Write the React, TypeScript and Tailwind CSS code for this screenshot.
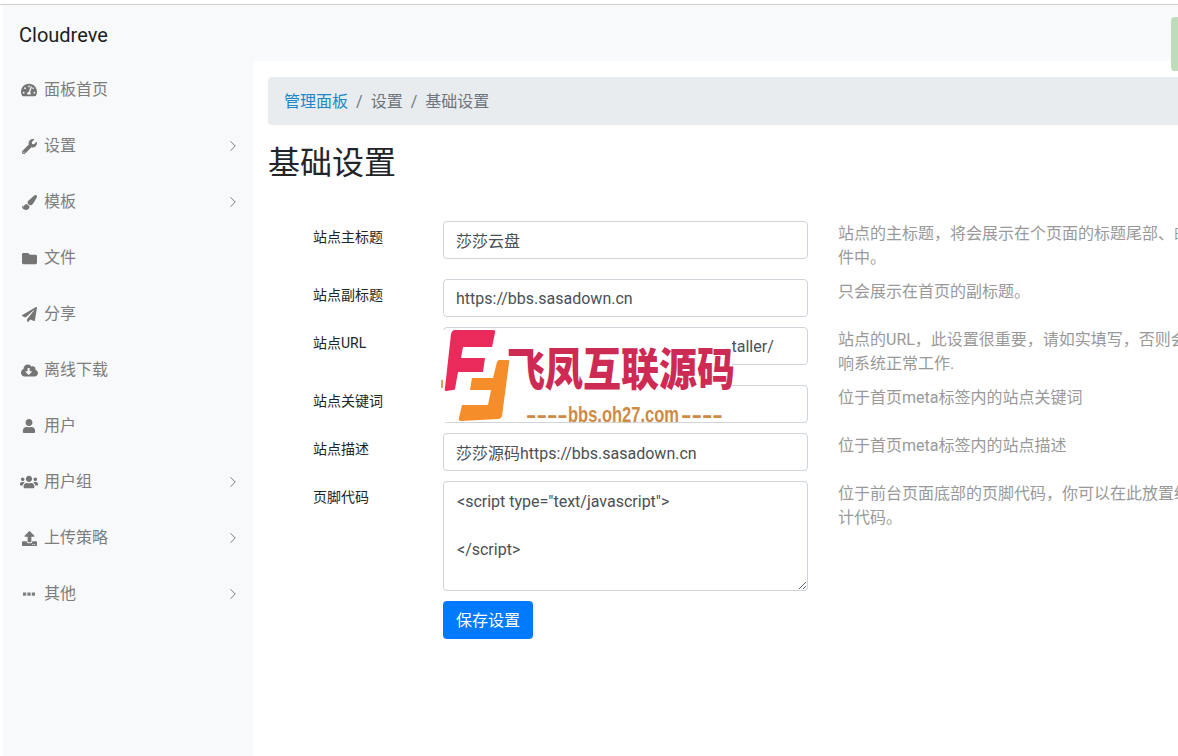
import { ChevronRight } from "lucide-react";
import type { IconType } from "react-icons";
import {
  FaTachometerAlt,
  FaWrench,
  FaPaintBrush,
  FaFolder,
  FaPaperPlane,
  FaCloudDownloadAlt,
  FaUser,
  FaUsers,
  FaUpload,
} from "react-icons/fa";

const FONT = "font-['Roboto','Noto_Sans_CJK_SC',sans-serif]";

// old font-awesome ellipsis has square dots, the package one is round
function SquareDots({ size }: { size?: number | string }) {
  return (
    <svg width={size} height={size} viewBox="0 0 14 14" fill="currentColor">
      <rect x="1" y="5.5" width="3.2" height="3.2" />
      <rect x="5.4" y="5.5" width="3.2" height="3.2" />
      <rect x="9.8" y="5.5" width="3.2" height="3.2" />
    </svg>
  );
}

const navItems: { label: string; icon: IconType; size: number; more?: boolean }[] = [
  { label: "面板首页", icon: FaTachometerAlt, size: 16 },
  { label: "设置", icon: FaWrench, size: 15, more: true },
  { label: "模板", icon: FaPaintBrush, size: 15, more: true },
  { label: "文件", icon: FaFolder, size: 15 },
  { label: "分享", icon: FaPaperPlane, size: 15 },
  { label: "离线下载", icon: FaCloudDownloadAlt, size: 17 },
  { label: "用户", icon: FaUser, size: 14 },
  { label: "用户组", icon: FaUsers, size: 18, more: true },
  { label: "上传策略", icon: FaUpload, size: 15, more: true },
  { label: "其他", icon: SquareDots as IconType, size: 14, more: true },
];

const inputClass =
  "h-[38px] w-[365px] rounded border border-[#ced4da] bg-white px-3 text-base text-[#495057] outline-none";

function Field({ label, value, help, tall }: { label: string; value: string; help: string; tall?: boolean }) {
  return (
    <div className={`flex items-start ${tall ? "h-[58px]" : "h-[48px]"}`}>
      <label className="w-[130px] pt-[7px] text-sm leading-[18px] text-[#212529]">{label}</label>
      <input className={inputClass} defaultValue={value} readOnly />
      <p className="ml-[30px] w-[365px] shrink-0 pt-px text-base leading-6 text-[#999999]">{help}</p>
    </div>
  );
}

function Dashes() {
  return (
    <span className="inline-block w-[42px] origin-left scale-x-[1.9] tracking-normal">----</span>
  );
}

function Watermark() {
  return (
    <div className="absolute left-[443px] top-[330px] h-[92px] w-[289px] bg-white">
      <div className="absolute left-[-2px] top-[50px] h-[8px] w-[2px] bg-[#d9a05f]" />
      <svg className="absolute left-0 top-0" width="70" height="92" viewBox="0 0 70 92">
        <path
          d="M12 0H50Q53 0 52 3L49 17H20L18 28H42L40 42H15L12 59Q12 60 10 60L3 61Q1 61 2 58L8 4Q9 0 12 0Z"
          fill="#ea2a5b"
        />
        <path
          d="M56 30H65Q67 30 66 33L59 86Q58 89 55 89L18 91Q15 91 16 88L19 75H45L48 60H27L29 48H50L54 32Q55 30 56 30Z"
          fill="#f58d2a"
        />
      </svg>
      <div className="absolute left-[64px] top-[12px] origin-top scale-y-[1.2] whitespace-nowrap text-[38px] leading-[42px] font-black text-[#cd2a54] font-['Noto_Sans_CJK_SC',sans-serif]">
        飞凤互联源码
      </div>
      <div className="absolute left-[83px] top-[74px] flex h-[20px] origin-center scale-y-[1.3] items-center whitespace-nowrap text-[16.5px] font-bold text-[#cf8a45] font-['Liberation_Sans',sans-serif]">
        <Dashes />
        <span>bbs.oh27.com</span>
        <span className="ml-[2px] flex">
          <Dashes />
        </span>
      </div>
    </div>
  );
}

export default function App() {
  return (
    <div className={`${FONT} relative h-[756px] w-[1178px] overflow-hidden bg-white`}>
      <div className="h-[5px] border-b border-[#cfcfcf] bg-white" />
      <div className="ml-[3px] flex h-[751px] flex-col">
        <header className="flex h-[56px] shrink-0 items-center bg-[#f8f9fa] pl-4 pt-1">
          <span className="text-xl text-[#1d1d1d]">Cloudreve</span>
        </header>
        <div className="flex min-h-0 flex-1">
          <aside className="w-[250px] shrink-0 bg-[#f8f9fa]">
            {navItems.map(({ label, icon: Icon, size, more }) => (
              <div key={label} className="flex h-[56px] items-center pl-[18px] pr-[11px] pt-[2px] text-base text-[#7d7d7d]">
                <span className="flex w-4 justify-center">
                  <Icon size={size} className="shrink-0 text-[#757575]" />
                </span>
                <span className="ml-[7px] flex-1">{label}</span>
                {more && <ChevronRight size={18} strokeWidth={1.2} className="text-[#6e6e6e]" />}
              </div>
            ))}
          </aside>
          <main className="min-w-0 flex-1 pl-[15px] pt-4">
            <nav className="flex h-[48px] w-[1000px] items-center rounded bg-[#e9ecef] px-4 pt-[2px] text-base text-[#6c757d]">
              <span className="text-[#1f86c7]">管理面板</span>
              <span className="px-2">/</span>
              <span>设置</span>
              <span className="px-2">/</span>
              <span>基础设置</span>
            </nav>
            <h1 className="mt-[14px] text-[32px] leading-[48px] font-normal text-[#212529]">基础设置</h1>
            <form className="ml-[45px] mt-[34px] w-[900px]">
              <Field
                tall
                label="站点主标题"
                value="莎莎云盘"
                help="站点的主标题，将会展示在个页面的标题尾部、邮件中。"
              />
              <Field label="站点副标题" value="https://bbs.sasadown.cn" help="只会展示在首页的副标题。" />
              <Field
                tall
                label="站点URL"
                value="https://bbs.sasadown.cn/cloudrive/installer/"
                help="站点的URL，此设置很重要，请如实填写，否则会影响系统正常工作."
              />
              <Field label="站点关键词" value="" help="位于首页meta标签内的站点关键词" />
              <Field label="站点描述" value="莎莎源码https://bbs.sasadown.cn" help="位于首页meta标签内的站点描述" />
              <div className="flex h-[120px] items-start">
                <label className="w-[130px] pt-[7px] text-sm leading-[18px] text-[#212529]">页脚代码</label>
                <textarea
                  className="h-[110px] w-[365px] rounded border border-[#ced4da] bg-white px-[13px] py-[8px] text-base leading-6 text-[#495057] outline-none"
                  defaultValue={'<script type="text/javascript">\n\n</script>'}
                  readOnly
                />
                <p className="ml-[30px] w-[365px] shrink-0 pt-px text-base leading-6 text-[#999999]">
                  位于前台页面底部的页脚代码，你可以在此放置统计代码。
                </p>
              </div>
              <button
                type="button"
                className="ml-[130px] h-[38px] rounded bg-[#007bff] px-[13px] pt-[2px] text-base text-white"
              >
                保存设置
              </button>
            </form>
          </main>
        </div>
      </div>
      <Watermark />
      <div className="absolute left-[1171px] top-[17px] h-[54px] w-[12px] rounded bg-[#bedcbc]" />
    </div>
  );
}
